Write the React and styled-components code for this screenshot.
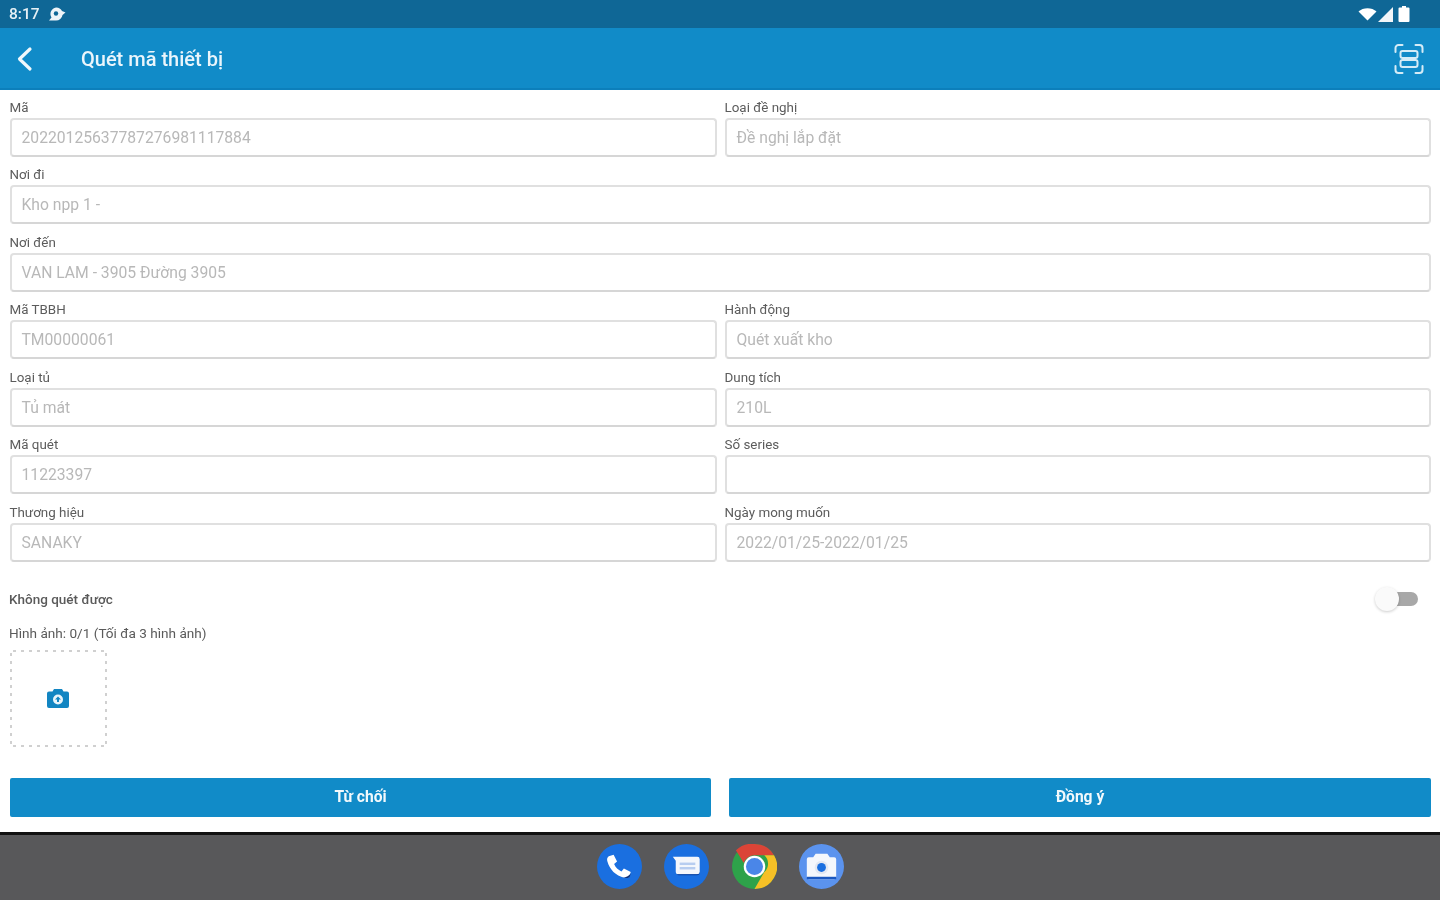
import React from "react";
import styled, { createGlobalStyle } from "styled-components";

const GlobalStyle = createGlobalStyle`
  html, body { margin: 0; padding: 0; background: #fff; }
  body { font-family: Roboto, "Liberation Sans", sans-serif; }
  * { box-sizing: border-box; }
`;

const Page = styled.div`
  width: 1440px;
  height: 900px;
  display: flex;
  flex-direction: column;
  overflow: hidden;
  background: #fff;
`;

const StatusBar = styled.div`
  height: 28px;
  flex: none;
  background: #0f6796;
  color: #e6f0f5;
  display: flex;
  align-items: center;
  justify-content: space-between;
  padding: 0 30px 0 9px;
`;

const StatusGroup = styled.div`
  display: flex;
  align-items: center;
  gap: ${(p) => p.$gap || 8}px;
  font-size: 15.5px;
  font-weight: 500;
  filter: blur(0.6px);
`;

const AppBar = styled.header`
  height: 62px;
  flex: none;
  background: #118bc8;
  border-bottom: 2px solid #0c7fbb;
  color: #fff;
  display: flex;
  align-items: center;
  padding: 2px 16px 0 15px;
`;

const BackButton = styled.div`
  width: 66px;
  display: flex;
  align-items: center;
`;

const Title = styled.h1`
  flex: 1;
  margin: 0;
  font-size: 20px;
  line-height: 1;
  font-weight: 500;
  color: #eaf5fb;
  filter: blur(0.6px);
`;

const FormGrid = styled.div`
  display: grid;
  grid-template-columns: 707px 706px;
  column-gap: 8px;
  margin-top: -1px;
  padding-left: 10px;
`;

const Field = styled.div`
  grid-column: ${(p) => (p.$wide ? "1 / -1" : "auto")};
  display: flex;
  flex-direction: column;
`;

const Label = styled.label`
  height: 28.5px;
  margin-left: -0.5px;
  display: flex;
  align-items: flex-end;
  padding-bottom: 3px;
  font-size: 13.4px;
  color: #5c5c5c;
  filter: blur(0.6px);
`;

const Input = styled.div`
  height: 39px;
  border: 2px solid #e0e0e0;
  border-bottom-color: #d6d6d6;
  border-radius: 4px;
  padding: 0 9.5px;
  display: flex;
  align-items: center;
  font-size: 15.7px;
  color: #b8b8b8;
  white-space: nowrap;
  filter: blur(0.6px);
`;

const ToggleRow = styled.div`
  display: flex;
  align-items: center;
  justify-content: space-between;
  margin-top: 24px;
  padding: 0 22px 0 9px;
  height: 26px;
`;

const SmallText = styled.span`
  font-size: ${(p) => p.$size || 13.6}px;
  font-weight: ${(p) => p.$weight || 400};
  color: #5a5a5a;
  filter: blur(0.6px);
`;

const Toggle = styled.div`
  width: 34px;
  height: 14px;
  border-radius: 7px;
  background: #a8a8a8;
  position: relative;
  filter: blur(0.5px);
`;

const Knob = styled.div`
  position: absolute;
  left: -9px;
  top: -5px;
  width: 24px;
  height: 24px;
  border-radius: 50%;
  background: #fafafa;
  box-shadow: 0 1px 3px rgba(0, 0, 0, 0.2);
`;

const ImagesBlock = styled.div`
  margin-top: 11px;
  padding-left: 9px;
`;

const UploadBox = styled.div`
  width: 97px;
  height: 97px;
  margin: 8px 0 0 1px;
  padding-right: 2px;
  border-radius: 4px;
  display: flex;
  align-items: center;
  justify-content: center;
  background-image:
    linear-gradient(to right, #d0d0d0 3px, transparent 3px),
    linear-gradient(to right, #d0d0d0 3px, transparent 3px),
    linear-gradient(to bottom, #d0d0d0 3px, transparent 3px),
    linear-gradient(to bottom, #d0d0d0 3px, transparent 3px);
  background-size: 8px 2px, 8px 2px, 2px 8px, 2px 8px;
  background-position: 3px 0, 3px 100%, 0 3px, 100% 3px;
  background-repeat: repeat-x, repeat-x, repeat-y, repeat-y;
`;

const Actions = styled.div`
  display: grid;
  grid-template-columns: 701px 702px;
  column-gap: 18px;
  margin-top: 31px;
  padding-left: 10px;
`;

const ActionButton = styled.button`
  height: 39px;
  border: none;
  border-radius: 2px;
  background: #118bc8;
  color: #f2f9fc;
  font-family: inherit;
  font-size: 15.6px;
  font-weight: 700;
  padding: 0;
`;

const ButtonText = styled.span`
  display: inline-block;
  filter: blur(0.6px);
`;

const Spacer = styled.div`
  flex: 1;
`;

const NavBar = styled.nav`
  height: 68px;
  flex: none;
  background: #58585a;
  border-top: 3px solid #111;
  display: flex;
  align-items: center;
  justify-content: center;
  gap: 22.300px;
  padding: 0 0 2px 1px;
`;

const AppIcon = styled.svg`
  width: 45px;
  height: 45px;
  display: block;
  filter: blur(0.5px);
`;

const BackIcon = () => (
  <svg width="20" height="26" viewBox="0 0 20 26" fill="none">
    <path d="M15 3 L4.5 13 L15 23" stroke="#f0f8fc" strokeWidth="3.2" strokeLinecap="round" strokeLinejoin="round" />
  </svg>
);

const ScanIcon = () => (
  <svg width="30" height="30" viewBox="0 0 30 30" fill="none" stroke="#d5ecf7" strokeWidth="2" strokeLinecap="round">
    <path d="M1.500 8V4a3 3 0 0 1 3-3h4M21.500 1h4a3 3 0 0 1 3 3v4M1.500 22v4a3 3 0 0 0 3 3h4M21.500 29h4a3 3 0 0 0 3-3v-4" />
    <rect x="6.500" y="7" width="17" height="7" rx="2" />
    <rect x="6.500" y="16" width="17" height="7" rx="2" />
  </svg>
);

const MessageStatusIcon = () => (
  <svg width="18" height="14" viewBox="0 0 18 14" fill="#eef4f8">
    <path d="M8 0.500a6.500 6.500 0 0 1 6 3.500l3.500 1.500L14.500 8A6.500 6.500 0 0 1 8 13.500H1l2.500-3A6.500 6.500 0 0 1 8 0.500z" />
    <circle cx="8" cy="6.500" r="2.200" fill="#0f6796" />
  </svg>
);

const WifiIcon = () => (
  <svg width="19" height="14" viewBox="0 0 19 14" fill="#fff" style={{ marginRight: -2 }}>
    <path d="M0.500 4.500C5 0 14 0 18.500 4.500L9.500 13.500z" />
  </svg>
);

const SignalIcon = () => (
  <svg width="15" height="15" viewBox="0 0 15 15" fill="#f2f6f9">
    <path d="M15 0V15H0z" />
  </svg>
);

const BatteryIcon = () => (
  <svg width="12" height="16" viewBox="0 0 12 16" fill="#fff" style={{ marginLeft: 2 }}>
    <path d="M4 0h4v1.500h2.500a1 1 0 0 1 1 1V15a1 1 0 0 1-1 1h-9a1 1 0 0 1-1-1V2.500a1 1 0 0 1 1-1H4z" />
  </svg>
);

const CameraUploadIcon = () => (
  <svg width="24" height="22" viewBox="0 0 24 22">
    <path d="M8 2h8l1.500 2.500H21a2 2 0 0 1 2 2V19a2 2 0 0 1-2 2H3a2 2 0 0 1-2-2V6.500a2 2 0 0 1 2-2h3.500z" fill="#1285c2" />
    <circle cx="12" cy="12.500" r="5" fill="#e8f4fa" />
    <path d="M12 9.500l3 3h-2v2.500h-2v-2.500H9z" fill="#1285c2" />
  </svg>
);

const PhoneApp = () => (
  <AppIcon viewBox="0 0 46 46">
    <circle cx="23" cy="23" r="23" fill="#1a6fe0" />
    <path d="M12 12.500l5-1.500 3.500 7-3 2.500c1.500 3.500 4 6 7.500 7.500l2.500-3 7 3.500-1.500 5c-1 1.500-3 1.500-5 1-9-2-15-8-17.500-17-.5-2 0-4 1.500-5z" fill="#fff" />
    <path d="M34.500 30l-1 3.500c-1 1.500-3 1.500-5 1l-2-0.600c3 0.400 6-1 8-3.900z" fill="#0b2f7a" />
  </AppIcon>
);

const MessagesApp = () => (
  <AppIcon viewBox="0 0 46 46">
    <circle cx="23" cy="23" r="23" fill="#1a6fe0" />
    <path d="M9 13h25a2.500 2.500 0 0 1 2.500 2.500v13a2.500 2.500 0 0 1-2.500 2.500H15a3 3 0 0 1-3-3V17z" fill="#f4f7fc" />
    <rect x="16" y="19" width="16" height="2.500" fill="#b7cdf0" />
    <rect x="16" y="23.500" width="16" height="2.500" fill="#b7cdf0" />
    <path d="M13 31h21a2.500 2.500 0 0 0 2.500-2.500v1a2.500 2.500 0 0 1-2.500 2.500H15a3 3 0 0 1-2-1z" fill="#0b3f9a" />
  </AppIcon>
);

const ChromeApp = () => (
  <AppIcon viewBox="0 0 46 46">
    <circle cx="23" cy="23" r="23" fill="#2ea24a" />
    <path d="M23 0a23 23 0 0 1 20 11.500H23a11.500 11.500 0 0 0-11 8L4 6.500A23 23 0 0 1 23 0z" fill="#db4437" />
    <path d="M43 11.500A23 23 0 0 1 23 46l10-17.300a11.500 11.500 0 0 0 0-17.200z" fill="#f6c026" />
    <circle cx="23" cy="23" r="11" fill="#fff" />
    <circle cx="23" cy="23" r="8.700" fill="#4a86e8" />
  </AppIcon>
);

const CameraApp = () => (
  <AppIcon viewBox="0 0 46 46">
    <circle cx="23" cy="23" r="23" fill="#5b93ee" />
    <path d="M17 10h12l2.500 3.500H36a2 2 0 0 1 2 2V34a2 2 0 0 1-2 2H10a2 2 0 0 1-2-2V15.500a2 2 0 0 1 2-2h4.500z" fill="#f4f7fc" />
    <circle cx="23" cy="24" r="7" fill="#e3e8f2" />
    <circle cx="23" cy="24" r="4.500" fill="#1a6fe0" />
    <rect x="8" y="33.500" width="30" height="2.500" fill="#1b58c0" />
  </AppIcon>
);

const fields = [
  { label: "Mã", value: "20220125637787276981117884" },
  { label: "Loại đề nghị", value: "Đề nghị lắp đặt" },
  { label: "Nơi đi", value: "Kho npp 1 -", wide: true },
  { label: "Nơi đến", value: "VAN LAM - 3905 Đường 3905", wide: true },
  { label: "Mã TBBH", value: "TM00000061" },
  { label: "Hành động", value: "Quét xuất kho" },
  { label: "Loại tủ", value: "Tủ mát" },
  { label: "Dung tích", value: "210L" },
  { label: "Mã quét", value: "11223397" },
  { label: "Số series", value: "" },
  { label: "Thương hiệu", value: "SANAKY" },
  { label: "Ngày mong muốn", value: "2022/01/25-2022/01/25" },
];

export default function App() {
  return (
    <Page>
      <GlobalStyle />
      <StatusBar>
        <StatusGroup>
          <span>8:17</span>
          <MessageStatusIcon />
        </StatusGroup>
        <StatusGroup $gap={3}>
          <WifiIcon />
          <SignalIcon />
          <BatteryIcon />
        </StatusGroup>
      </StatusBar>
      <AppBar>
        <BackButton>
          <BackIcon />
        </BackButton>
        <Title>Quét mã thiết bị</Title>
        <ScanIcon />
      </AppBar>
      <FormGrid>
        {fields.map((f) => (
          <Field key={f.label} $wide={f.wide}>
            <Label>{f.label}</Label>
            <Input>{f.value}</Input>
          </Field>
        ))}
      </FormGrid>
      <ToggleRow>
        <SmallText $size={13.5} $weight={500}>Không quét được</SmallText>
        <Toggle>
          <Knob />
        </Toggle>
      </ToggleRow>
      <ImagesBlock>
        <SmallText>Hình ảnh: 0/1 (Tối đa 3 hình ảnh)</SmallText>
        <UploadBox>
          <CameraUploadIcon />
        </UploadBox>
      </ImagesBlock>
      <Actions>
        <ActionButton>
          <ButtonText>Từ chối</ButtonText>
        </ActionButton>
        <ActionButton>
          <ButtonText>Đồng ý</ButtonText>
        </ActionButton>
      </Actions>
      <Spacer />
      <NavBar>
        <PhoneApp />
        <MessagesApp />
        <ChromeApp />
        <CameraApp />
      </NavBar>
    </Page>
  );
}
